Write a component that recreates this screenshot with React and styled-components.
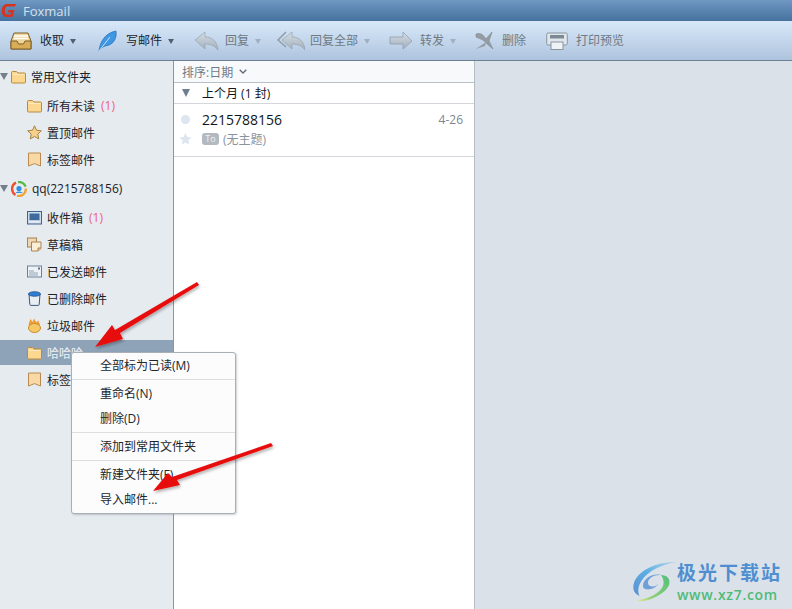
import React from 'react';
import styled, { createGlobalStyle } from 'styled-components';

const Global = createGlobalStyle`
  html, body { margin: 0; padding: 0; }
  body { font-family: "Open Sans", "Noto Sans CJK SC", sans-serif; font-size: 12px; overflow: hidden; }
`;

const Page = styled.div`
  position: relative;
  width: 792px;
  height: 609px;
  display: flex;
  flex-direction: column;
  overflow: hidden;
  background: #dae1e9;
`;

const TitleBar = styled.div`
  height: 21px;
  display: flex;
  align-items: center;
  gap: 6px;
  padding-left: 1px;
  background: linear-gradient(#6f98c2, #46729f);
  color: #d5e1ee;
  font-family: "Open Sans", sans-serif;
  font-size: 13px;
`;

const Toolbar = styled.div`
  height: 40px;
  display: flex;
  align-items: center;
  padding-left: 10px;
  box-sizing: border-box;
  border-bottom: 1px solid #6d8093;
  background: linear-gradient(#d8e8f9, #aec4de);
`;

const ToolItem = styled.div`
  display: flex;
  align-items: center;
  margin-right: ${(p) => p.$after}px;
  color: ${(p) => (p.$disabled ? '#6f7984' : '#1c242c')};
  line-height: 16px;
`;

const ToolIcon = styled.svg`
  display: block;
  margin-right: ${(p) => p.$gap || 8}px;
`;

const Caret = styled.span`
  width: 0;
  height: 0;
  margin-left: 6px;
  margin-top: 2px;
  border-left: 3.5px solid transparent;
  border-right: 3.5px solid transparent;
  border-top: 5px solid ${(p) => (p.$disabled ? '#9fb0c2' : '#4f5f70')};
`;

const Body = styled.div`
  flex: 1;
  display: flex;
  min-height: 0;
`;

const Sidebar = styled.div`
  width: 174px;
  box-sizing: border-box;
  padding-top: 3px;
  background: #e6ebf0;
  border-right: 1px solid #8996a4;
`;

const FolderGroup = styled.div`
  display: flex;
  align-items: center;
  height: 25px;
  margin-bottom: 4px;
  color: #1b2127;
  & ~ & {
    margin-top: 4px;
  }
`;

const GroupArrow = styled.span`
  width: 0;
  height: 0;
  margin-right: 3px;
  border-left: 4px solid transparent;
  border-right: 4px solid transparent;
  border-top: 7px solid #737f8b;
`;

const FolderRow = styled.div`
  display: flex;
  align-items: center;
  height: 25px;
  margin-bottom: 2px;
  padding-left: 27px;
  color: ${(p) => (p.$selected ? '#eef2f6' : '#1b2127')};
  background: ${(p) => (p.$selected ? '#8fa3b8' : 'transparent')};
`;

const RowIcon = styled.svg`
  display: block;
  flex: none;
  margin-right: 5px;
`;

const Unread = styled.span`
  margin-left: 6px;
  color: #ee5f80;
`;

const ListPane = styled.div`
  width: 301px;
  box-sizing: border-box;
  background: #fff;
  border-right: 1px solid #b4bcc5;
`;

const SortBar = styled.div`
  height: 22px;
  box-sizing: border-box;
  display: flex;
  align-items: center;
  gap: 6px;
  padding-left: 8px;
  color: #717b85;
  background: #f7f9fb;
  border-bottom: 1px solid #b9c0c7;
`;

const MonthRow = styled.div`
  height: 21px;
  box-sizing: border-box;
  display: flex;
  align-items: center;
  padding-left: 8px;
  color: #10161c;
  border-bottom: 1px solid #d3d7db;
`;

const MonthArrow = styled.span`
  width: 0;
  height: 0;
  margin-right: 12px;
  border-left: 4.5px solid transparent;
  border-right: 4.5px solid transparent;
  border-top: 8px solid #6e7f90;
`;

const MailItem = styled.div`
  height: 53px;
  box-sizing: border-box;
  padding: 5px 11px 0 7px;
  border-bottom: 1px solid #d3d7db;
`;

const MailLine = styled.div`
  display: flex;
  align-items: center;
  height: 20px;
`;

const Dot = styled.span`
  width: 9px;
  height: 9px;
  margin: 0 12px 0 0;
  border-radius: 50%;
  background: #dde5ef;
`;

const Star = styled.svg`
  margin: 0 10px 0 -2px;
`;

const Sender = styled.span`
  flex: 1;
  color: #10161c;
  font-size: 14px;
`;

const MailDate = styled.span`
  color: #7d8791;
`;

const ToBadge = styled.span`
  width: 17px;
  height: 12px;
  margin-right: 4px;
  border-radius: 3px;
  background: #b3b9c1;
  color: #eef0f2;
  font-size: 9px;
  line-height: 12px;
  text-align: center;
`;

const Subject = styled.span`
  color: #8b939c;
`;

const ReadPane = styled.div`
  flex: 1;
  background: #dae1e9;
`;

const Menu = styled.div`
  position: absolute;
  left: 71px;
  top: 352px;
  width: 165px;
  height: 162px;
  box-sizing: border-box;
  background: #fcfcfd;
  border: 1px solid #a9afb6;
  border-radius: 3px;
  box-shadow: 1px 1px 2px rgba(60, 70, 80, 0.25);
`;

const MenuItem = styled.div`
  height: 25px;
  line-height: 25px;
  padding-left: 28px;
  color: #20262c;
`;

const MenuLine = styled.div`
  height: 1px;
  margin: 1px 0;
  background: #dcdfe2;
`;

const Overlay = styled.svg`
  position: absolute;
  left: 0;
  top: 0;
  pointer-events: none;
`;

const Watermark = styled.div`
  position: absolute;
  left: 633px;
  top: 559px;
  display: flex;
  align-items: center;
  gap: 0;
`;

const MarkText = styled.div`
  display: flex;
  flex-direction: column;
`;

const MarkTitle = styled.div`
  color: #4f8fd0;
  font-family: "Noto Sans CJK SC", sans-serif;
  font-size: 19px;
  font-weight: 700;
  line-height: 26px;
  letter-spacing: 2px;
`;

const MarkUrl = styled.div`
  color: #4fbb78;
  font-size: 14px;
  font-weight: 600;
  line-height: 19px;
  letter-spacing: 0.7px;
`;

const FolderIcon = () => (
  <RowIcon width="15" height="14" viewBox="0 0 15 14">
    <path d="M.5 2.500V12a1 1 0 0 0 1 1h12a1 1 0 0 0 1-1V4a1 1 0 0 0-1-1H7L5.500 1.500h-4a1 1 0 0 0-1 1Z" fill="#fbd78f" stroke="#b98a3f" />
    <path d="M1.500 4.500h12" stroke="#fdeac2" />
  </RowIcon>
);

const StarIcon = () => (
  <RowIcon width="15" height="15" viewBox="0 0 15 15">
    <path d="M7.500 .8l2 4.400 4.800.6-3.500 3.300.9 4.800-4.200-2.400-4.200 2.400.9-4.800L.7 5.800l4.800-.6Z" fill="#f6d08a" stroke="#a5823f" />
  </RowIcon>
);

const TagIcon = () => (
  <RowIcon width="15" height="15" viewBox="0 0 15 15">
    <path d="M1.500 1h12v13l-6-2.400-6 2.400Z" fill="#f8d9a6" stroke="#b98a4f" />
  </RowIcon>
);

const QQIcon = () => (
  <RowIcon width="16" height="16" viewBox="0 0 16 16">
    <path d="M7 1.100a7 7 0 0 1 7.600 4.500" fill="none" stroke="#58b947" strokeWidth="2.400" />
    <path d="M14.800 7.500A7 7 0 0 1 6 14.800" fill="none" stroke="#f2a32c" strokeWidth="2.400" />
    <path d="M4.500 14A7 7 0 0 1 5 1.700" fill="none" stroke="#e8502f" strokeWidth="2.400" />
    <circle cx="8" cy="7.500" r="2.600" fill="#2f8fe0" />
    <path d="M4.500 12c1-2 6-2 7 0Z" fill="#2f8fe0" />
  </RowIcon>
);

const InboxIcon = () => (
  <RowIcon width="15" height="15" viewBox="0 0 15 15">
    <rect x=".5" y="1.500" width="14" height="12.500" fill="#cfdcea" stroke="#3f6391" />
    <rect x="2.500" y="3.500" width="10" height="7" fill="#3f6a9e" />
    <path d="M2.500 10.500h10v2h-10Z" fill="#e9eef4" />
  </RowIcon>
);

const DraftIcon = () => (
  <RowIcon width="15" height="15" viewBox="0 0 15 15">
    <rect x=".5" y="1" width="9" height="9" fill="#eed7b4" stroke="#a9824f" />
    <path d="M4.500 5h9.500v6.500L11 14H4.500Z" fill="#fbeed7" stroke="#a9824f" />
    <path d="M11 14v-3h3" fill="#e6c690" stroke="#a9824f" />
  </RowIcon>
);

const SentIcon = () => (
  <RowIcon width="15" height="15" viewBox="0 0 15 15">
    <rect x=".5" y="2" width="14" height="11" fill="#eef2f6" stroke="#6c8199" />
    <rect x="11" y="3.500" width="2" height="2" fill="#55708f" />
    <path d="M2 7h5M2 9h9M2 11h9" stroke="#8ea2b6" />
  </RowIcon>
);

const TrashIcon = () => (
  <RowIcon width="15" height="15" viewBox="0 0 15 15">
    <path d="M2 3h11l-.8 10.500a1 1 0 0 1-1 .9H3.800a1 1 0 0 1-1-.9Z" fill="#e9eef3" stroke="#3e5a78" />
    <ellipse cx="7.500" cy="3" rx="6" ry="2.200" fill="#2f7fd6" stroke="#2b5a90" />
  </RowIcon>
);

const JunkIcon = () => (
  <RowIcon width="15" height="15" viewBox="0 0 15 15">
    <path d="M2 8C1 5 3 4 3 1c1.500 1 2 2 2.500 3C6 3 6.500 1.500 7.500 .5c0 2 1.500 2.500 2 4 .5-1 1-1.500 2-2 0 2 2 3.500 1.500 5.500Z" fill="#ee9f34" />
    <ellipse cx="7.500" cy="10" rx="6" ry="4.500" fill="#f6c866" stroke="#c98a2c" />
  </RowIcon>
);

const ReplyShape = ({ x = 0 }) => (
  <path transform={`translate(${x} 0)`} d="M1 9 11 1v5c7 0 12 4 13 13-3-4-7-6-13-6v5Z" fill="url(#grayArrow)" stroke="#8e9aa6" strokeWidth=".6" />
);

const folders = [
  { name: '所有未读', icon: FolderIcon, unread: 1 },
  { name: '置顶邮件', icon: StarIcon },
  { name: '标签邮件', icon: TagIcon },
];

const accountFolders = [
  { name: '收件箱', icon: InboxIcon, unread: 1 },
  { name: '草稿箱', icon: DraftIcon },
  { name: '已发送邮件', icon: SentIcon },
  { name: '已删除邮件', icon: TrashIcon },
  { name: '垃圾邮件', icon: JunkIcon },
  { name: '哈哈哈', icon: FolderIcon, selected: true },
  { name: '标签邮件', icon: TagIcon },
];

function Row({ item }) {
  const Icon = item.icon;
  return (
    <FolderRow $selected={item.selected}>
      <Icon />
      {item.name}
      {item.unread ? <Unread>({item.unread})</Unread> : null}
    </FolderRow>
  );
}

export default function App() {
  return (
    <Page>
      <Global />
      <TitleBar>
        <svg width="16" height="15" viewBox="0 0 16 15">
          <path d="M15 1H6C3 1 1.200 3.500 .8 6.500.4 10.500 2 14 5.500 14h6L13.500 7H7.500L7 9.500h3L9.500 11.500H6c-1.800 0-2.300-2-2-5C4.300 4.800 5 3.500 6.500 3.500H14Z" fill="#d8331f" />
        </svg>
        Foxmail
      </TitleBar>
      <Toolbar>
        <svg width="0" height="0" style={{ position: 'absolute' }}>
          <defs>
            <linearGradient id="grayArrow" x1="0" y1="0" x2="0" y2="1">
              <stop offset="0" stopColor="#d5dde5" />
              <stop offset="1" stopColor="#a3afbb" />
            </linearGradient>
          </defs>
        </svg>
        <ToolItem $after={22}>
          <ToolIcon width="22" height="20" viewBox="0 0 22 20">
            <path d="M4 2h14l3 8v8H1v-8Z" fill="#eed497" stroke="#7d5f2c" />
            <path d="M4 5h14M4 7.500h14" stroke="#fff" strokeWidth="1.500" />
            <path d="M1 10h6l1.500 3h5L15 10h6v8H1Z" fill="#d9ad56" stroke="#7d5f2c" />
          </ToolIcon>
          收取
          <Caret />
        </ToolItem>
        <ToolItem $after={20}>
          <ToolIcon width="20" height="22" viewBox="0 0 20 22">
            <path d="M1 21C2 12 7 3 18 1c1 7-2 14-11 15l-4 2Z" fill="#3f97e4" stroke="#1f6cb4" strokeWidth=".7" />
            <path d="M1 21 12 7" stroke="#bfe0fa" />
          </ToolIcon>
          写邮件
          <Caret />
        </ToolItem>
        <ToolItem $after={16} $disabled>
          <ToolIcon width="25" height="20" viewBox="0 0 25 20" $gap={6}>
            <ReplyShape />
          </ToolIcon>
          回复
          <Caret $disabled />
        </ToolItem>
        <ToolItem $after={19} $disabled>
          <ToolIcon width="28" height="20" viewBox="0 0 28 20" $gap={5}>
            <path d="M9 1 1 9l8 7" fill="none" stroke="#8e9aa6" strokeWidth="1.500" />
            <ReplyShape x={4} />
          </ToolIcon>
          回复全部
          <Caret $disabled />
        </ToolItem>
        <ToolItem $after={19} $disabled>
          <ToolIcon width="24" height="20" viewBox="0 0 24 20" $gap={7}>
            <path d="M1 6h13V1l9 9-9 8v-5H1Z" fill="url(#grayArrow)" stroke="#8e9aa6" strokeWidth=".7" />
          </ToolIcon>
          转发
          <Caret $disabled />
        </ToolItem>
        <ToolItem $after={20} $disabled>
          <ToolIcon width="19" height="20" viewBox="0 0 19 20">
            <path d="M1 3c5-2 8 2 10 5l6-7-3 9 4 8-7-6C8 8 5 8 1 6Z" fill="#969ca3" stroke="#7d848b" strokeWidth=".6" />
            <path d="M11 11 1 18l9-3Z" fill="#969ca3" />
          </ToolIcon>
          删除
        </ToolItem>
        <ToolItem $after={0} $disabled>
          <ToolIcon width="22" height="20" viewBox="0 0 22 20">
            <rect x=".7" y="2" width="20.600" height="12" rx="1.500" fill="#dfe6ec" stroke="#8a959f" />
            <rect x="4" y="4" width="14" height="3.500" fill="#7f8994" />
            <rect x="5" y="11" width="12" height="7.500" fill="#f0f3f6" stroke="#8a959f" />
          </ToolIcon>
          打印预览
        </ToolItem>
      </Toolbar>
      <Body>
        <Sidebar>
          <FolderGroup>
            <GroupArrow />
            <FolderIcon />
            常用文件夹
          </FolderGroup>
          {folders.map((f) => <Row key={f.name} item={f} />)}
          <FolderGroup>
            <GroupArrow />
            <QQIcon />
            qq(2215788156)
          </FolderGroup>
          {accountFolders.map((f) => <Row key={f.name} item={f} />)}
        </Sidebar>
        <ListPane>
          <SortBar>
            排序:日期
            <svg width="8" height="5" viewBox="0 0 8 5">
              <path d="M.7.7 4 4 7.300.7" fill="none" stroke="#5f6a75" strokeWidth="1.300" />
            </svg>
          </SortBar>
          <MonthRow>
            <MonthArrow />
            上个月 (1 封)
          </MonthRow>
          <MailItem>
            <MailLine>
              <Dot />
              <Sender>2215788156</Sender>
              <MailDate>4-26</MailDate>
            </MailLine>
            <MailLine>
              <Star width="13" height="12" viewBox="0 0 13 12">
                <path d="M6.500 0l1.800 3.900 4.200.5-3.100 2.900.8 4.200-3.700-2.100-3.700 2.100.8-4.200L.5 4.400l4.200-.5Z" fill="#dde5ef" />
              </Star>
              <ToBadge>To</ToBadge>
              <Subject>(无主题)</Subject>
            </MailLine>
          </MailItem>
        </ListPane>
        <ReadPane />
      </Body>
      <Menu>
        <MenuItem>全部标为已读(M)</MenuItem>
        <MenuLine />
        <MenuItem>重命名(N)</MenuItem>
        <MenuItem>删除(D)</MenuItem>
        <MenuLine />
        <MenuItem>添加到常用文件夹</MenuItem>
        <MenuLine />
        <MenuItem>新建文件夹(F)</MenuItem>
        <MenuItem>导入邮件...</MenuItem>
      </Menu>
      <Overlay width="792" height="609" viewBox="0 0 792 609">
        <defs>
          <filter id="arrowShadow" x="-20%" y="-20%" width="140%" height="140%">
            <feDropShadow dx="1" dy="2" stdDeviation="1.500" floodColor="#000" floodOpacity="0.3" />
          </filter>
          <linearGradient id="swirlBlue" x1="1" y1="0" x2="0" y2="1">
            <stop offset="0" stopColor="#b9d8ea" />
            <stop offset=".5" stopColor="#5aaee2" />
            <stop offset="1" stopColor="#5d8fd0" />
          </linearGradient>
          <linearGradient id="swirlGreen" x1="1" y1="0" x2="0" y2="1">
            <stop offset="0" stopColor="#52c07a" />
            <stop offset=".7" stopColor="#8fcf78" />
            <stop offset="1" stopColor="#e8e48a" />
          </linearGradient>
        </defs>
        <path d="M197 282 199 285 120 333 123 339 95 347 112 325 115 330Z" fill="#e8100f" filter="url(#arrowShadow)" />
        <path d="M271 443 273 446 177 480 180 485 153 491 168 473 172 477Z" fill="#e8100f" filter="url(#arrowShadow)" />
      </Overlay>
      <Watermark>
        <svg width="44" height="42" viewBox="0 0 44 42">
          <path d="M44 1C26 0 3 9 .5 24c-1 6 2 9 6 11C3 28 7 17 20 9 27 5 36 2 44 1Z" fill="url(#swirlBlue)" />
          <path d="M28 14c6 0 10 4 8 10-3 8-18 16-28 16-2 0-3-.5-4-1 12-1 23-7 26-14 1.500-4 0-8-2-11Z" fill="url(#swirlGreen)" />
          <path d="M10 24c1-7 10-12 18-10-7-.5-13 3-13 8 0 4 6 5 10 1-3 6-16 8-15 1Z" fill="#6f9fd8" />
        </svg>
        <MarkText>
          <MarkTitle>极光下载站</MarkTitle>
          <MarkUrl>www.xz7.com</MarkUrl>
        </MarkText>
      </Watermark>
    </Page>
  );
}
